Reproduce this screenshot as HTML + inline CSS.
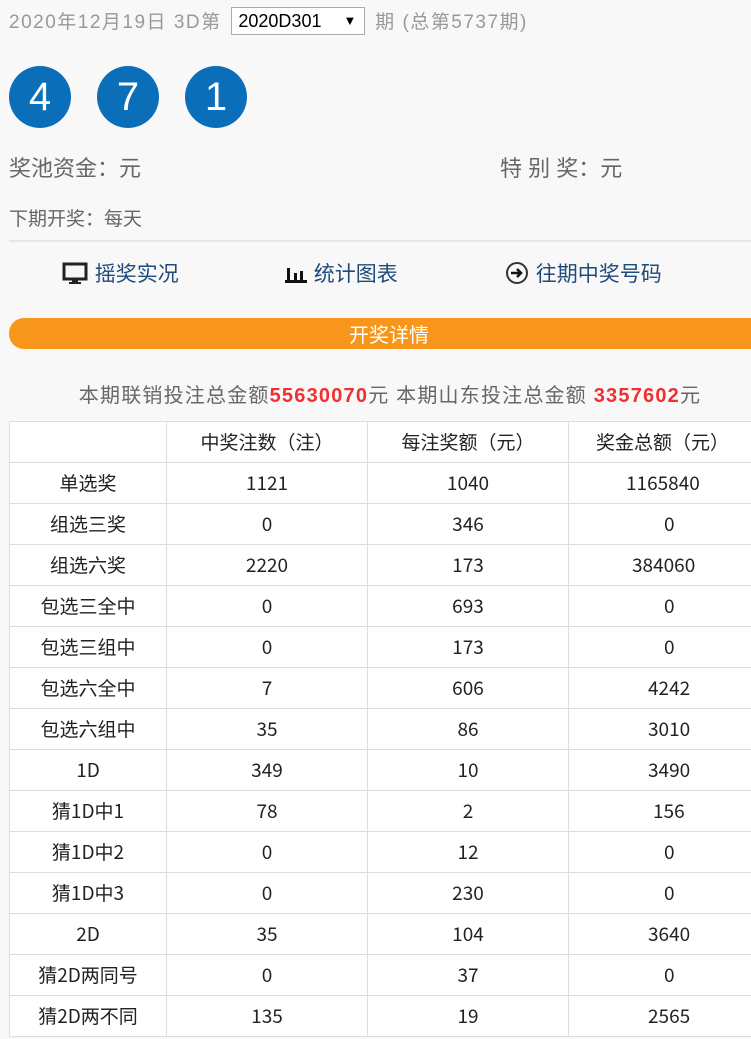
<!DOCTYPE html>
<html><head><meta charset="utf-8"><style>
body{margin:0;background:#f8f8f8;font-family:"Liberation Sans","Noto Sans CJK SC",sans-serif;width:751px;height:1039px;overflow:hidden;position:relative;color:#333}
.a{position:absolute;white-space:nowrap}
.top{left:9px;top:7px;font-size:19px;color:#999;letter-spacing:1.5px}
.sel{display:inline-block;border:1px solid #aaa;background:#fff;color:#000;padding-left:6px;box-sizing:border-box;width:134px;height:28px;line-height:26px;vertical-align:middle;margin:0 3px;font-size:18px;position:relative;top:-2px;letter-spacing:0}
.ball{position:absolute;top:66px;width:62px;height:62px;border-radius:50%;background:#0a6fb8;color:#fff;font-size:40px;text-align:center;line-height:62px}
.nav{font-size:21px;color:#1f4a7a;top:258px;font-family:"Noto Sans CJK SC",sans-serif}
.bar{left:9px;top:318px;width:760px;height:31px;border-radius:15px;background:#f7961a;color:#fff;text-align:center;font-size:20px;line-height:31px;font-family:"Noto Sans CJK SC",sans-serif}
table{position:absolute;left:9px;top:421px;border-collapse:collapse;background:#fff;font-size:19px;color:#222;table-layout:fixed;width:820px;font-family:"Noto Sans CJK SC",sans-serif}
td{border:1px solid #ddd;height:40px;text-align:center;padding:0;line-height:40px;vertical-align:middle}
</style></head><body>
<div class="a top">2020年12月19日 3D第 <span class="sel">2020D301 <span style="position:absolute;right:8px;font-size:13px">▼</span></span> 期 (总第5737期)</div>
<div class="ball" style="left:9px">4</div>
<div class="ball" style="left:97px">7</div>
<div class="ball" style="left:185px">1</div>
<div class="a" style="left:9px;top:151px;font-size:22px;color:#666">奖池资金：元</div>
<div class="a" style="left:500px;top:151px;font-size:22px;color:#666">特 别 奖：元</div>
<div class="a" style="left:9px;top:204px;font-size:19px;color:#666">下期开奖：每天</div>
<div class="a" style="left:9px;top:240px;width:742px;height:2px;background:#e6e6e6"></div>
<div class="a nav" style="left:62px"><svg width="28" height="22" viewBox="0 0 28 22" style="vertical-align:-3px"><rect x="2" y="2" width="22" height="15" fill="none" stroke="#222" stroke-width="3"/><rect x="10" y="17" width="6" height="3" fill="#222"/><rect x="7" y="20" width="12" height="2" fill="#222"/></svg> 摇奖实况</div>
<div class="a nav" style="left:285px"><svg width="24" height="20" viewBox="0 0 24 20" style="vertical-align:-2px"><rect x="0" y="17" width="22" height="3" fill="#111"/><rect x="2" y="5" width="3" height="12" fill="#111"/><rect x="9" y="10" width="3" height="7" fill="#111"/><rect x="15" y="8" width="3" height="9" fill="#111"/></svg> 统计图表</div>
<div class="a nav" style="left:505px"><svg width="26" height="24" viewBox="0 0 26 24" style="vertical-align:-4px"><circle cx="12" cy="12" r="10" fill="none" stroke="#333" stroke-width="2"/><path d="M6 12h10M12 8l4 4-4 4" fill="none" stroke="#111" stroke-width="2.5"/></svg> 往期中奖号码</div>
<div class="a bar">开奖详情</div>
<div class="a" style="left:0;width:780px;top:379px;text-align:center;font-size:20px;color:#666;letter-spacing:1.2px">本期联销投注总金额<b style="color:#f03030">55630070</b>元 本期山东投注总金额 <b style="color:#f03030">3357602</b>元</div>
<table>
<colgroup><col style="width:157px"><col style="width:201px"><col style="width:201px"><col style="width:261px"></colgroup>
<tr><td></td><td>中奖注数（注）</td><td>每注奖额（元）</td><td style="text-align:left;padding-left:27px">奖金总额（元）</td></tr>
<tr><td>单选奖</td><td>1121</td><td>1040</td><td style="text-align:left;padding-left:57px">1165840</td></tr>
<tr><td>组选三奖</td><td>0</td><td>346</td><td style="text-align:left;padding-left:95px">0</td></tr>
<tr><td>组选六奖</td><td>2220</td><td>173</td><td style="text-align:left;padding-left:63px">384060</td></tr>
<tr><td>包选三全中</td><td>0</td><td>693</td><td style="text-align:left;padding-left:95px">0</td></tr>
<tr><td>包选三组中</td><td>0</td><td>173</td><td style="text-align:left;padding-left:95px">0</td></tr>
<tr><td>包选六全中</td><td>7</td><td>606</td><td style="text-align:left;padding-left:79px">4242</td></tr>
<tr><td>包选六组中</td><td>35</td><td>86</td><td style="text-align:left;padding-left:79px">3010</td></tr>
<tr><td>1D</td><td>349</td><td>10</td><td style="text-align:left;padding-left:79px">3490</td></tr>
<tr><td>猜1D中1</td><td>78</td><td>2</td><td style="text-align:left;padding-left:84px">156</td></tr>
<tr><td>猜1D中2</td><td>0</td><td>12</td><td style="text-align:left;padding-left:95px">0</td></tr>
<tr><td>猜1D中3</td><td>0</td><td>230</td><td style="text-align:left;padding-left:95px">0</td></tr>
<tr><td>2D</td><td>35</td><td>104</td><td style="text-align:left;padding-left:79px">3640</td></tr>
<tr><td>猜2D两同号</td><td>0</td><td>37</td><td style="text-align:left;padding-left:95px">0</td></tr>
<tr><td>猜2D两不同</td><td>135</td><td>19</td><td style="text-align:left;padding-left:79px">2565</td></tr>
</table>
</body></html>
